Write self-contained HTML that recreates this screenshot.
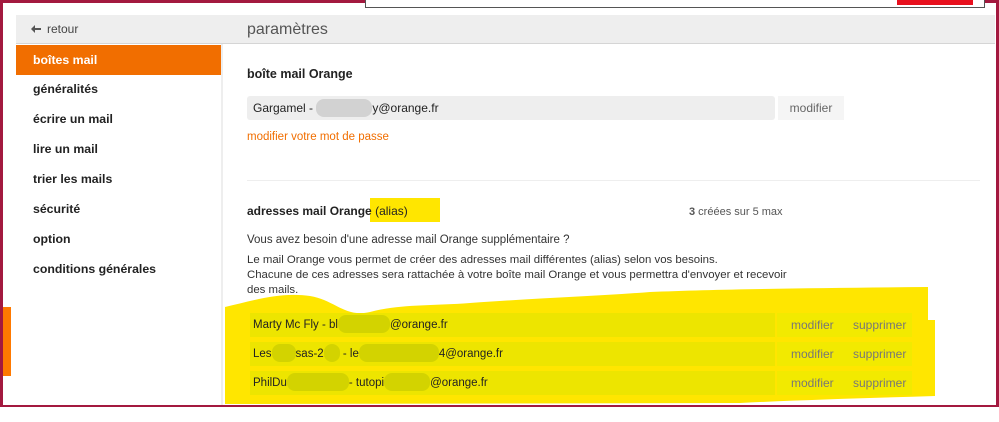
<!DOCTYPE html><html><head><meta charset="utf-8"><style>
*{margin:0;padding:0;box-sizing:border-box}
body{width:999px;height:422px;background:#fff;position:relative;overflow:hidden;font-family:"Liberation Sans",Arial,sans-serif;font-size:12px;color:#333}
.a{position:absolute}
.nav{left:33px;font-weight:bold;font-size:12.3px;color:#222}
.b{display:inline-block;height:18px;border-radius:8px;background:#d2d2d2;vertical-align:-5px}
.y{background:#d3d300}
.row{position:absolute;left:253px;font-size:11.5px;color:#222;line-height:18px}
</style></head><body>
<div class="a" style="left:0;top:0;width:999px;height:407px;border:3px solid #a3193f;border-bottom-width:2px"></div>
<div class="a" style="left:365px;top:0;width:620px;height:8px;border:1px solid #555;border-top:none;background:#fff"></div>
<div class="a" style="left:897px;top:0;width:76px;height:5px;background:#e8101e"></div>
<div class="a" style="left:16px;top:15px;width:979px;height:29px;background:#eee;border-bottom:1px solid #d5d5d5"></div>
<svg class="a" style="left:31px;top:25px" width="10" height="8"><path d="M4 0 L0 4 L4 8 L4 5 L10 5 L10 3 L4 3 Z" fill="#555"/></svg>
<div class="a" style="left:47px;top:22px;font-size:12px;color:#444">retour</div>
<div class="a" style="left:247px;top:21px;font-size:16px;color:#555">paramètres</div>
<div class="a" style="left:221px;top:44px;width:2px;height:361px;background:#eee"></div>
<div class="a" style="left:16px;top:45px;width:205px;height:30px;background:#f16e00"></div>
<div class="a nav" style="top:53px;color:#fff">boîtes mail</div>
<div class="a nav" style="top:82px">généralités</div>
<div class="a nav" style="top:112px">écrire un mail</div>
<div class="a nav" style="top:142px">lire un mail</div>
<div class="a nav" style="top:172px">trier les mails</div>
<div class="a nav" style="top:202px">sécurité</div>
<div class="a nav" style="top:232px">option</div>
<div class="a nav" style="top:262px">conditions générales</div>
<div class="a" style="left:3px;top:307px;width:8px;height:69px;background:#ff7900"></div>
<div class="a" style="left:247px;top:67px;font-weight:bold;font-size:12.5px;color:#222">boîte mail Orange</div>
<div class="a" style="left:247px;top:96px;width:528px;height:24px;background:#eee;border-radius:3px"></div>
<div class="row" style="top:99px;font-size:12px">Gargamel - <span class="b" style="width:56px"></span>y@orange.fr</div>
<div class="a" style="left:778px;top:96px;width:66px;height:24px;background:#f5f5f5;color:#666;text-align:center;line-height:24px">modifier</div>
<div class="a" style="left:247px;top:131px;color:#f16e00;font-size:11.5px">modifier votre mot de passe</div>
<div class="a" style="left:247px;top:180px;width:733px;height:1px;background:#eee"></div>
<div class="a" style="left:370px;top:198px;width:70px;height:24px;background:#ffe600"></div>
<div class="a" style="left:247px;top:204px;font-size:12px;color:#222"><b>adresses mail Orange</b> (alias)</div>
<div class="a" style="left:689px;top:206px;font-size:11px;color:#555"><b>3</b> créées sur 5 max</div>
<div class="a" style="left:247px;top:234px;font-size:11.5px;color:#333">Vous avez besoin d'une adresse mail Orange supplémentaire ?</div>
<div class="a" style="left:247px;top:253px;font-size:11.4px;color:#333;line-height:15px;width:600px">Le mail Orange vous permet de créer des adresses mail différentes (alias) selon vos besoins.<br>Chacune de ces adresses sera rattachée à votre boîte mail Orange et vous permettra d'envoyer et recevoir<br>des mails.</div>
<svg class="a" style="left:0;top:0" width="999" height="422"><path d="M225 307 C255 300 280 292 310 296 C335 300 345 318 370 312 C400 304 430 306 470 303 C540 298 600 296 650 292 C720 289 820 288 928 287 L928 320 L935 320 L935 396 C870 398 800 400 740 403 L225 404 Z" fill="#ffe600"/></svg>
<div class="a" style="left:250px;top:313px;width:525px;height:24px;background:#ede500"></div>
<div class="a" style="left:250px;top:342px;width:525px;height:24px;background:#ede500"></div>
<div class="a" style="left:250px;top:371px;width:525px;height:24px;background:#ede500"></div>
<div class="a" style="left:777px;top:313px;width:135px;height:24px;background:#f2ea00"></div>
<div class="a" style="left:777px;top:342px;width:135px;height:24px;background:#f2ea00"></div>
<div class="a" style="left:777px;top:371px;width:135px;height:24px;background:#f2ea00"></div>
<div class="row" style="top:315px">Marty Mc Fly - bl<span class="b y" style="width:52px"></span>@orange.fr</div>
<div class="row" style="top:344px">Les<span class="b y" style="width:24px"></span>sas-2<span class="b y" style="width:16px"></span> - le<span class="b y" style="width:80px"></span>4@orange.fr</div>
<div class="row" style="top:373px">PhilDu<span class="b y" style="width:62px"></span>- tutopi<span class="b y" style="width:46px"></span>@orange.fr</div>
<div class="a" style="left:791px;top:318px;color:#777">modifier</div><div class="a" style="left:853px;top:318px;color:#777">supprimer</div>
<div class="a" style="left:791px;top:347px;color:#777">modifier</div><div class="a" style="left:853px;top:347px;color:#777">supprimer</div>
<div class="a" style="left:791px;top:376px;color:#777">modifier</div><div class="a" style="left:853px;top:376px;color:#777">supprimer</div>
</body></html>
